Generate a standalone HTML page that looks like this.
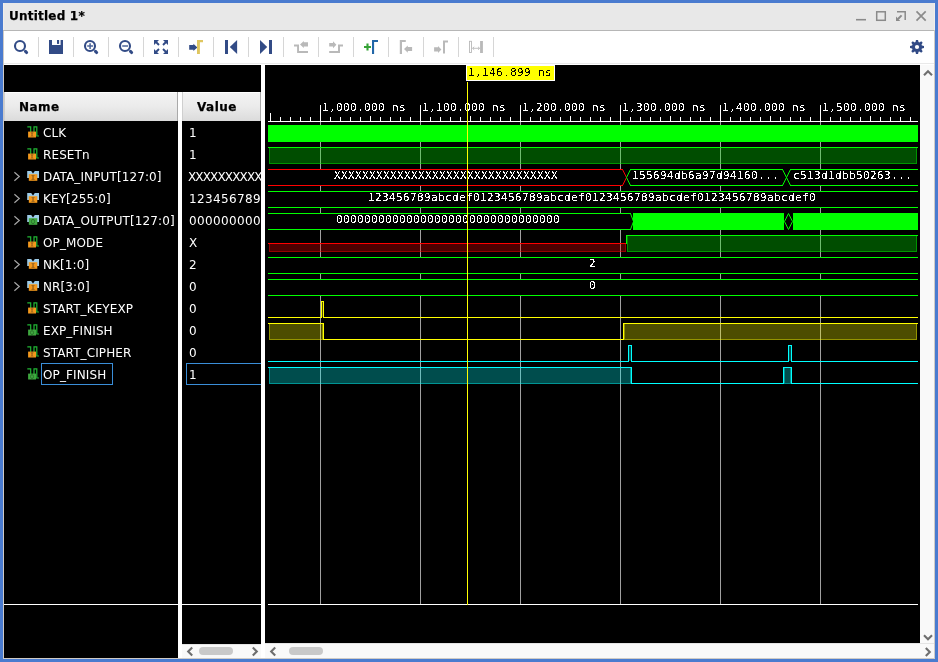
<!DOCTYPE html>
<html><head><meta charset="utf-8"><title>Untitled 1*</title>
<style>
html,body{margin:0;padding:0}
body{width:938px;height:662px;overflow:hidden;background:#4a7bcf;position:relative;font-family:"DejaVu Sans","Liberation Sans",sans-serif;font-size:12px}
#frame{position:absolute;left:3px;top:3px;width:932px;height:656px;background:#cfcbc6}
#title{position:absolute;left:3px;top:3px;width:930px;height:27px;background:#e8e8e8;border-left:1px solid #f1eeea;border-right:1px solid #f1eeea}
#title b{position:absolute;left:4.6px;top:6px;font-size:12px;line-height:15px;font-weight:bold;color:#000;letter-spacing:.22px;-webkit-text-stroke:.25px #000;will-change:transform}
#tline{position:absolute;left:3px;top:30px;width:931px;height:1px;background:#b6b6b6}
#tool{position:absolute;left:4px;top:31px;width:930px;height:34px;background:#fff}
#tool2{position:absolute;left:4px;top:63px;width:930px;height:1px;background:#e9e9e9}
svg{position:absolute;display:block}
svg.tb{left:3px;top:31px} svg.tt{left:3px;top:3px} svg.sc{left:0;top:0}
svg.wave{left:265px;top:65px;font-family:"DejaVu Sans Mono","Liberation Mono",monospace;font-size:11px;letter-spacing:.378px}
#left{position:absolute;left:4px;top:65px;width:257px;height:593px;background:#000}
#div1{position:absolute;left:178px;top:92px;width:4px;height:566px;background:#fff}
#div2{position:absolute;left:261px;top:65px;width:4px;height:593px;background:#fff}
.hdr{position:absolute;top:92px;height:29px;box-sizing:border-box;background:linear-gradient(#fff,#fff 1px,#f3f3f3 1px,#ebebeb 50%,#dbdbdb);border-left:1px solid #cfcfcf;border-right:1px solid #a9a9a9;font-weight:bold;color:#000;line-height:15px}
.hdr span{position:absolute;top:8px;letter-spacing:.45px;-webkit-text-stroke:.25px #000;will-change:transform}
#hn{left:4px;width:174px} #hv{left:182px;width:79px}
.nrow{position:absolute;left:4px;width:174px;height:22px;color:#fff}
.nrow .chev{left:9px;top:6px}
.nrow .ic{left:23px;top:5px}
.nrow .ic.bus{top:6px}
.nm{position:absolute;left:39.1px;top:5px;will-change:transform;letter-spacing:.11px;line-height:15px;white-space:nowrap}
#vals{position:absolute;left:182px;top:65px;width:79px;height:579px;overflow:hidden}
.vrow{position:absolute;left:0;width:200px;height:22px;color:#fff;margin-top:-65px}
.vrow span{position:absolute;left:7px;top:5px;will-change:transform;line-height:15px;white-space:nowrap}

.selb{position:absolute;box-sizing:border-box;border:1px solid #3a8ed8}
.hline{position:absolute;top:604px;height:1px;background:#fff}
.sb{position:absolute;background:#f9f9f9}
.thumb{position:absolute;height:8px;border-radius:4px;background:#c9c9c9;top:651px;margin-top:-4px}
</style></head><body>
<div id="frame"></div>
<div id="title"><b>Untitled 1*</b></div>
<svg class="tt" width="932" height="27" viewBox="3 3 932 27"><path d="M856 19.7 H866" stroke="#8a8a8a" stroke-width="1.6"/>
<rect x="876.7" y="11.8" width="8.6" height="8.5" fill="none" stroke="#8a8a8a" stroke-width="1.5"/>
<path d="M897 11.7 H905.2 V19.9" fill="none" stroke="#8a8a8a" stroke-width="1.5"/><path d="M901.6 15.4 L898 19" stroke="#8a8a8a" stroke-width="2"/><path d="M896 21 V16.5 L900.3 21 Z" fill="#8a8a8a"/>
<path d="M916.5 11.3 L925.7 20.6 M925.7 11.3 L916.5 20.6" stroke="#8a8a8a" stroke-width="1.7"/></svg>
<div id="tline"></div>
<div id="tool"></div><div id="tool2"></div>
<svg class="tb" width="932" height="34" viewBox="3 31 932 34"><rect x="38" y="37" width="1" height="20" fill="#d6d6d6" shape-rendering="crispEdges"/>
<rect x="73" y="37" width="1" height="20" fill="#d6d6d6" shape-rendering="crispEdges"/>
<rect x="108" y="37" width="1" height="20" fill="#d6d6d6" shape-rendering="crispEdges"/>
<rect x="143" y="37" width="1" height="20" fill="#d6d6d6" shape-rendering="crispEdges"/>
<rect x="178" y="37" width="1" height="20" fill="#d6d6d6" shape-rendering="crispEdges"/>
<rect x="213" y="37" width="1" height="20" fill="#d6d6d6" shape-rendering="crispEdges"/>
<rect x="248" y="37" width="1" height="20" fill="#d6d6d6" shape-rendering="crispEdges"/>
<rect x="283" y="37" width="1" height="20" fill="#d6d6d6" shape-rendering="crispEdges"/>
<rect x="318" y="37" width="1" height="20" fill="#d6d6d6" shape-rendering="crispEdges"/>
<rect x="353" y="37" width="1" height="20" fill="#d6d6d6" shape-rendering="crispEdges"/>
<rect x="388" y="37" width="1" height="20" fill="#d6d6d6" shape-rendering="crispEdges"/>
<rect x="423" y="37" width="1" height="20" fill="#d6d6d6" shape-rendering="crispEdges"/>
<rect x="458" y="37" width="1" height="20" fill="#d6d6d6" shape-rendering="crispEdges"/>
<rect x="493" y="37" width="1" height="20" fill="#d6d6d6" shape-rendering="crispEdges"/>
<circle cx="20" cy="46" r="5" fill="none" stroke="#324b86" stroke-width="2.1"/><path d="M25.5 51.4 L26.6 52.5" stroke="#324b86" stroke-width="3.1" stroke-linecap="round"/>
<path d="M49 40 h3 v5 h8.6 v-5 h2.4 v14 h-14 z" fill="#324b86"/><rect x="57" y="40" width="2.1" height="3.9" fill="#324b86"/>
<circle cx="90" cy="46" r="5" fill="none" stroke="#324b86" stroke-width="2.1"/><path d="M95.5 51.4 L96.6 52.5" stroke="#324b86" stroke-width="3.1" stroke-linecap="round"/><path d="M87.2 46 H93 M90.1 43.2 V48.9" stroke="#4c6499" stroke-width="1.5"/>
<circle cx="125" cy="46" r="5" fill="none" stroke="#324b86" stroke-width="2.1"/><path d="M130.5 51.4 L131.6 52.5" stroke="#324b86" stroke-width="3.1" stroke-linecap="round"/><path d="M122.2 46 H128" stroke="#4c6499" stroke-width="1.5"/>
<g fill="#324b86" stroke="#324b86"><path d="M154 40 h5 l-5 5z M168 40 v5 l-5 -5z M154 54 v-5 l5 5z M168 54 h-5 l5 -5z" stroke="none"/><path d="M156 42 L159 45 M166 42 L163 45 M156 52 L159 49 M166 52 L163 49" stroke-width="1.9" fill="none"/></g>
<path d="M189.2 45 H193.4 V43.8 L197.4 47.4 L193.4 51 V49.8 H189.2 Z" fill="#324b86"/><path d="M197 40 H203 V42.3 H199.9 V54 H197 Z" fill="#dfc65f"/>
<rect x="225" y="40" width="3" height="14" fill="#324b86"/><path d="M229.8 47 L237.1 40 V54 Z" fill="#324b86"/>
<rect x="269" y="40" width="3" height="14" fill="#324b86"/><path d="M267.2 47 L260 40 V54 Z" fill="#324b86"/>
<path d="M294 44.5 H299 V51 H308 V53 H297.1 V46.6 H294 Z" fill="#b9b9b9"/><path d="M300 44.4 L303.8 41 V42.3 H308 V46.6 H303.8 V48 Z" fill="#b9b9b9"/>
<path d="M343 44.4 H338 V50.9 H329.2 V53 H340 V46.6 H343 Z" fill="#b9b9b9"/><path d="M336.4 44.8 L333 41.3 V43 H329.2 V46.6 H333 V48.3 Z" fill="#b9b9b9"/>
<path d="M364 47 H371 M367.5 43.5 V50.5" stroke="#36a336" stroke-width="2.1"/><path d="M372 40 H378 V42 H374.1 V54 H372 Z" fill="#2166a8"/>
<path d="M399.8 40 H405.8 V42 H402 V54 H399.8 Z" fill="#b9b9b9"/><path d="M404 49.1 L407.8 45.4 V47 H412.1 V51.1 H407.8 V52.8 Z" fill="#b9b9b9"/>
<path d="M443 40.5 H448 V42.4 H445 V53.4 H443 Z" fill="#b9b9b9"/><path d="M441.4 49.4 L438 46 V47.3 H434.1 V51.6 H438 V53 Z" fill="#b9b9b9"/>
<rect x="469.5" y="41.3" width="2" height="11.2" fill="#fff" stroke="#b9b9b9" stroke-width="0.9"/><rect x="480.1" y="41" width="2.8" height="12" fill="#b9b9b9"/><path d="M472.6 48.3 H479.6 M474.2 46.8 L472.6 48.3 L474.2 49.8 M478 46.8 L479.6 48.3 L478 49.8" stroke="#b9b9b9" stroke-width="0.9" fill="none"/>
<circle cx="917" cy="47" r="5" fill="#324b86"/><path d="M915.95 40 H918.05 L918.7 43 H915.3 Z" fill="#324b86" transform="rotate(0 917 47)"/><path d="M915.95 40 H918.05 L918.7 43 H915.3 Z" fill="#324b86" transform="rotate(45 917 47)"/><path d="M915.95 40 H918.05 L918.7 43 H915.3 Z" fill="#324b86" transform="rotate(90 917 47)"/><path d="M915.95 40 H918.05 L918.7 43 H915.3 Z" fill="#324b86" transform="rotate(135 917 47)"/><path d="M915.95 40 H918.05 L918.7 43 H915.3 Z" fill="#324b86" transform="rotate(180 917 47)"/><path d="M915.95 40 H918.05 L918.7 43 H915.3 Z" fill="#324b86" transform="rotate(225 917 47)"/><path d="M915.95 40 H918.05 L918.7 43 H915.3 Z" fill="#324b86" transform="rotate(270 917 47)"/><path d="M915.95 40 H918.05 L918.7 43 H915.3 Z" fill="#324b86" transform="rotate(315 917 47)"/><circle cx="917" cy="47" r="2.1" fill="#fff"/></svg>
<div id="left"></div>
<div id="div1"></div><div id="div2"></div>
<div class="hdr" id="hn"><span style="left:14px">Name</span></div>
<div class="hdr" id="hv"><span style="left:14px">Value</span></div>
<div class="nrow" style="top:121px"><svg class="ic" width="14" height="14" viewBox="0 0 14 14"><path d="M0.3 0.8 H3.7 V10 M7 10 V0.8 H9.8 V10 H12" fill="none" stroke="#21b634" stroke-width="1.2"/><rect x="1.1" y="5.6" width="7.9" height="5.9" fill="#f3981c"/><path d="M3.4 6.3 H6.7 L5.7 8 V9.2 L6.8 10.6 H3.3 L4.4 9.2 V8 Z" fill="#8a5a1c" opacity=".75"/></svg><span class="nm">CLK</span></div>
<div class="nrow" style="top:143px"><svg class="ic" width="14" height="14" viewBox="0 0 14 14"><path d="M0.3 0.8 H3.7 V10 M7 10 V0.8 H9.8 V10 H12" fill="none" stroke="#21b634" stroke-width="1.2"/><rect x="1.1" y="5.6" width="7.9" height="5.9" fill="#f3981c"/><path d="M3.4 6.3 H6.7 L5.7 8 V9.2 L6.8 10.6 H3.3 L4.4 9.2 V8 Z" fill="#8a5a1c" opacity=".75"/></svg><span class="nm">RESETn</span></div>
<div class="nrow" style="top:165px"><svg class="chev" width="8" height="11" viewBox="0 0 8 11"><path d="M1.4 1.2 L6.3 5.5 L1.4 9.8" fill="none" stroke="#a6a6a6" stroke-width="1.2"/></svg><svg class="ic bus" width="14" height="14" viewBox="0 0 14 14"><path d="M0.2 0 H4.2 L6 2.4 L7.8 0 H12 V7 H0.2 Z" fill="#9ccbe8"/><rect x="1.8" y="3.2" width="8.5" height="6.6" fill="#f3981c"/><path d="M4.2 3.9 H7.9 L6.8 5.6 V7.4 L8 9.1 H4.1 L5.3 7.4 V5.6 Z" fill="#8a5a1c" opacity=".75"/></svg><span class="nm">DATA_INPUT[127:0]</span></div>
<div class="nrow" style="top:187px"><svg class="chev" width="8" height="11" viewBox="0 0 8 11"><path d="M1.4 1.2 L6.3 5.5 L1.4 9.8" fill="none" stroke="#a6a6a6" stroke-width="1.2"/></svg><svg class="ic bus" width="14" height="14" viewBox="0 0 14 14"><path d="M0.2 0 H4.2 L6 2.4 L7.8 0 H12 V7 H0.2 Z" fill="#9ccbe8"/><rect x="1.8" y="3.2" width="8.5" height="6.6" fill="#f3981c"/><path d="M4.2 3.9 H7.9 L6.8 5.6 V7.4 L8 9.1 H4.1 L5.3 7.4 V5.6 Z" fill="#8a5a1c" opacity=".75"/></svg><span class="nm">KEY[255:0]</span></div>
<div class="nrow" style="top:209px"><svg class="chev" width="8" height="11" viewBox="0 0 8 11"><path d="M1.4 1.2 L6.3 5.5 L1.4 9.8" fill="none" stroke="#a6a6a6" stroke-width="1.2"/></svg><svg class="ic bus" width="14" height="14" viewBox="0 0 14 14"><path d="M0.2 0 H4.2 L6 2.4 L7.8 0 H12 V7 H0.2 Z" fill="#9ccbe8"/><rect x="1.8" y="3.2" width="8.5" height="6.6" fill="#3fa73f"/><ellipse cx="6" cy="6.5" rx="1.6" ry="2.2" fill="none" stroke="#2a6e2a" stroke-width=".9"/></svg><span class="nm">DATA_OUTPUT[127:0]</span></div>
<div class="nrow" style="top:231px"><svg class="ic" width="14" height="14" viewBox="0 0 14 14"><path d="M0.3 0.8 H3.7 V10 M7 10 V0.8 H9.8 V10 H12" fill="none" stroke="#21b634" stroke-width="1.2"/><rect x="1.1" y="5.6" width="7.9" height="5.9" fill="#f3981c"/><path d="M3.4 6.3 H6.7 L5.7 8 V9.2 L6.8 10.6 H3.3 L4.4 9.2 V8 Z" fill="#8a5a1c" opacity=".75"/></svg><span class="nm">OP_MODE</span></div>
<div class="nrow" style="top:253px"><svg class="chev" width="8" height="11" viewBox="0 0 8 11"><path d="M1.4 1.2 L6.3 5.5 L1.4 9.8" fill="none" stroke="#a6a6a6" stroke-width="1.2"/></svg><svg class="ic bus" width="14" height="14" viewBox="0 0 14 14"><path d="M0.2 0 H4.2 L6 2.4 L7.8 0 H12 V7 H0.2 Z" fill="#9ccbe8"/><rect x="1.8" y="3.2" width="8.5" height="6.6" fill="#f3981c"/><path d="M4.2 3.9 H7.9 L6.8 5.6 V7.4 L8 9.1 H4.1 L5.3 7.4 V5.6 Z" fill="#8a5a1c" opacity=".75"/></svg><span class="nm">NK[1:0]</span></div>
<div class="nrow" style="top:275px"><svg class="chev" width="8" height="11" viewBox="0 0 8 11"><path d="M1.4 1.2 L6.3 5.5 L1.4 9.8" fill="none" stroke="#a6a6a6" stroke-width="1.2"/></svg><svg class="ic bus" width="14" height="14" viewBox="0 0 14 14"><path d="M0.2 0 H4.2 L6 2.4 L7.8 0 H12 V7 H0.2 Z" fill="#9ccbe8"/><rect x="1.8" y="3.2" width="8.5" height="6.6" fill="#f3981c"/><path d="M4.2 3.9 H7.9 L6.8 5.6 V7.4 L8 9.1 H4.1 L5.3 7.4 V5.6 Z" fill="#8a5a1c" opacity=".75"/></svg><span class="nm">NR[3:0]</span></div>
<div class="nrow" style="top:297px"><svg class="ic" width="14" height="14" viewBox="0 0 14 14"><path d="M0.3 0.8 H3.7 V10 M7 10 V0.8 H9.8 V10 H12" fill="none" stroke="#21b634" stroke-width="1.2"/><rect x="1.1" y="5.6" width="7.9" height="5.9" fill="#f3981c"/><path d="M3.4 6.3 H6.7 L5.7 8 V9.2 L6.8 10.6 H3.3 L4.4 9.2 V8 Z" fill="#8a5a1c" opacity=".75"/></svg><span class="nm">START_KEYEXP</span></div>
<div class="nrow" style="top:319px"><svg class="ic" width="14" height="14" viewBox="0 0 14 14"><path d="M0.3 0.8 H3.7 V10 M7 10 V0.8 H9.8 V10 H12" fill="none" stroke="#21b634" stroke-width="1.2"/><rect x="1.1" y="5.6" width="7.9" height="5.9" fill="#3fa73f"/><ellipse cx="5" cy="8.6" rx="1.5" ry="2" fill="none" stroke="#2a6e2a" stroke-width=".9"/></svg><span class="nm">EXP_FINISH</span></div>
<div class="nrow" style="top:341px"><svg class="ic" width="14" height="14" viewBox="0 0 14 14"><path d="M0.3 0.8 H3.7 V10 M7 10 V0.8 H9.8 V10 H12" fill="none" stroke="#21b634" stroke-width="1.2"/><rect x="1.1" y="5.6" width="7.9" height="5.9" fill="#f3981c"/><path d="M3.4 6.3 H6.7 L5.7 8 V9.2 L6.8 10.6 H3.3 L4.4 9.2 V8 Z" fill="#8a5a1c" opacity=".75"/></svg><span class="nm">START_CIPHER</span></div>
<div class="nrow" style="top:363px"><svg class="ic" width="14" height="14" viewBox="0 0 14 14"><path d="M0.3 0.8 H3.7 V10 M7 10 V0.8 H9.8 V10 H12" fill="none" stroke="#21b634" stroke-width="1.2"/><rect x="1.1" y="5.6" width="7.9" height="5.9" fill="#3fa73f"/><ellipse cx="5" cy="8.6" rx="1.5" ry="2" fill="none" stroke="#2a6e2a" stroke-width=".9"/></svg><span class="nm">OP_FINISH</span></div>

<div id="vals">
<div class="vrow" style="top:121px"><span style="letter-spacing:.37px">1</span></div>
<div class="vrow" style="top:143px"><span style="letter-spacing:.37px">1</span></div>
<div class="vrow" style="top:165px"><span style="letter-spacing:-.85px;margin-left:-.6px">XXXXXXXXXXXXXXXXXXXXXXXXXXXXXXXX</span></div>
<div class="vrow" style="top:187px"><span style="letter-spacing:.37px">123456789abcdef0123456789abcdef0</span></div>
<div class="vrow" style="top:209px"><span style="letter-spacing:.37px">00000000000000000000000000000000</span></div>
<div class="vrow" style="top:231px"><span style="letter-spacing:.37px">X</span></div>
<div class="vrow" style="top:253px"><span style="letter-spacing:.37px">2</span></div>
<div class="vrow" style="top:275px"><span style="letter-spacing:.37px">0</span></div>
<div class="vrow" style="top:297px"><span style="letter-spacing:.37px">0</span></div>
<div class="vrow" style="top:319px"><span style="letter-spacing:.37px">0</span></div>
<div class="vrow" style="top:341px"><span style="letter-spacing:.37px">0</span></div>
<div class="vrow" style="top:363px"><span style="letter-spacing:.37px">1</span></div>

<div class="selb" style="left:4px;top:298px;width:90px;height:22px"></div>
</div>
<div class="selb" style="left:41px;top:363px;width:72px;height:22px"></div>
<div class="hline" style="left:4px;width:174px"></div>
<div class="hline" style="left:182px;width:79px"></div>
<svg class="wave" width="655" height="578" viewBox="265 65 655 578" shape-rendering="crispEdges"><defs><filter id="na" x="0" y="0" width="100%" height="100%" color-interpolation-filters="sRGB"><feComponentTransfer><feFuncA type="discrete" tableValues="0 0 0 1 1 1"/></feComponentTransfer></filter></defs><rect x="265" y="65" width="655" height="578" fill="#000"/>
<rect x="320" y="105" width="1" height="499" fill="#a0a0a0"/>
<rect x="420" y="105" width="1" height="499" fill="#a0a0a0"/>
<rect x="520" y="105" width="1" height="499" fill="#a0a0a0"/>
<rect x="620" y="105" width="1" height="499" fill="#a0a0a0"/>
<rect x="720" y="105" width="1" height="499" fill="#a0a0a0"/>
<rect x="820" y="105" width="1" height="499" fill="#a0a0a0"/>
<rect x="268" y="121" width="650" height="1" fill="#fff"/>
<rect x="270" y="113" width="1" height="8" fill="#fff"/>
<rect x="280" y="117" width="1" height="4" fill="#fff"/>
<rect x="290" y="117" width="1" height="4" fill="#fff"/>
<rect x="300" y="117" width="1" height="4" fill="#fff"/>
<rect x="310" y="117" width="1" height="4" fill="#fff"/>
<rect x="330" y="117" width="1" height="4" fill="#fff"/>
<rect x="340" y="117" width="1" height="4" fill="#fff"/>
<rect x="350" y="117" width="1" height="4" fill="#fff"/>
<rect x="360" y="117" width="1" height="4" fill="#fff"/>
<rect x="370" y="116" width="1" height="5" fill="#fff"/>
<rect x="380" y="117" width="1" height="4" fill="#fff"/>
<rect x="390" y="117" width="1" height="4" fill="#fff"/>
<rect x="400" y="117" width="1" height="4" fill="#fff"/>
<rect x="410" y="117" width="1" height="4" fill="#fff"/>
<rect x="430" y="117" width="1" height="4" fill="#fff"/>
<rect x="440" y="117" width="1" height="4" fill="#fff"/>
<rect x="450" y="117" width="1" height="4" fill="#fff"/>
<rect x="460" y="117" width="1" height="4" fill="#fff"/>
<rect x="470" y="116" width="1" height="5" fill="#fff"/>
<rect x="480" y="117" width="1" height="4" fill="#fff"/>
<rect x="490" y="117" width="1" height="4" fill="#fff"/>
<rect x="500" y="117" width="1" height="4" fill="#fff"/>
<rect x="510" y="117" width="1" height="4" fill="#fff"/>
<rect x="530" y="117" width="1" height="4" fill="#fff"/>
<rect x="540" y="117" width="1" height="4" fill="#fff"/>
<rect x="550" y="117" width="1" height="4" fill="#fff"/>
<rect x="560" y="117" width="1" height="4" fill="#fff"/>
<rect x="570" y="116" width="1" height="5" fill="#fff"/>
<rect x="580" y="117" width="1" height="4" fill="#fff"/>
<rect x="590" y="117" width="1" height="4" fill="#fff"/>
<rect x="600" y="117" width="1" height="4" fill="#fff"/>
<rect x="610" y="117" width="1" height="4" fill="#fff"/>
<rect x="630" y="117" width="1" height="4" fill="#fff"/>
<rect x="640" y="117" width="1" height="4" fill="#fff"/>
<rect x="650" y="117" width="1" height="4" fill="#fff"/>
<rect x="660" y="117" width="1" height="4" fill="#fff"/>
<rect x="670" y="116" width="1" height="5" fill="#fff"/>
<rect x="680" y="117" width="1" height="4" fill="#fff"/>
<rect x="690" y="117" width="1" height="4" fill="#fff"/>
<rect x="700" y="117" width="1" height="4" fill="#fff"/>
<rect x="710" y="117" width="1" height="4" fill="#fff"/>
<rect x="730" y="117" width="1" height="4" fill="#fff"/>
<rect x="740" y="117" width="1" height="4" fill="#fff"/>
<rect x="750" y="117" width="1" height="4" fill="#fff"/>
<rect x="760" y="117" width="1" height="4" fill="#fff"/>
<rect x="770" y="116" width="1" height="5" fill="#fff"/>
<rect x="780" y="117" width="1" height="4" fill="#fff"/>
<rect x="790" y="117" width="1" height="4" fill="#fff"/>
<rect x="800" y="117" width="1" height="4" fill="#fff"/>
<rect x="810" y="117" width="1" height="4" fill="#fff"/>
<rect x="830" y="117" width="1" height="4" fill="#fff"/>
<rect x="840" y="117" width="1" height="4" fill="#fff"/>
<rect x="850" y="117" width="1" height="4" fill="#fff"/>
<rect x="860" y="117" width="1" height="4" fill="#fff"/>
<rect x="870" y="116" width="1" height="5" fill="#fff"/>
<rect x="880" y="117" width="1" height="4" fill="#fff"/>
<rect x="890" y="117" width="1" height="4" fill="#fff"/>
<rect x="900" y="117" width="1" height="4" fill="#fff"/>
<rect x="910" y="117" width="1" height="4" fill="#fff"/>
<rect x="320" y="105" width="1" height="17" fill="#fff"/>
<rect x="420" y="105" width="1" height="17" fill="#fff"/>
<rect x="520" y="105" width="1" height="17" fill="#fff"/>
<rect x="620" y="105" width="1" height="17" fill="#fff"/>
<rect x="720" y="105" width="1" height="17" fill="#fff"/>
<rect x="820" y="105" width="1" height="17" fill="#fff"/>
<rect x="268" y="604" width="650" height="1" fill="#fff"/>
<rect x="268" y="125" width="650" height="17" fill="#00ff00"/>
<rect x="268" y="147" width="650" height="1" fill="#00ff00"/>
<rect x="269" y="148" width="648" height="16" fill="rgba(0,255,0,0.3)"/>
<rect x="269" y="163" width="648" height="1" fill="rgba(0,255,0,0.4)"/>
<rect x="269" y="148" width="1" height="15" fill="rgba(0,255,0,0.4)"/>
<rect x="916" y="148" width="1" height="15" fill="rgba(0,255,0,0.4)"/>
<polygon points="268.5,169.5 622.5,169.5 626.5,177.5 622.5,185.5 268.5,185.5" fill="#000"/>
<rect x="268" y="169" width="355" height="17" fill="#000"/>
<rect x="268" y="169" width="355" height="1" fill="#ff0000"/>
<rect x="268" y="185" width="355" height="1" fill="#ff0000"/>
<line x1="622.5" y1="169.5" x2="626.5" y2="177.5" stroke="#ff0000" stroke-width="1" shape-rendering="auto"/>
<line x1="622.5" y1="185.5" x2="626.5" y2="177.5" stroke="#ff0000" stroke-width="1" shape-rendering="auto"/>
<polygon points="626.5,177.5 630.5,169.5 782.5,169.5 786.5,177.5 782.5,185.5 630.5,185.5" fill="#000"/>
<rect x="630" y="169" width="153" height="17" fill="#000"/>
<rect x="630" y="169" width="153" height="1" fill="#00ff00"/>
<rect x="630" y="185" width="153" height="1" fill="#00ff00"/>
<line x1="626.5" y1="177.5" x2="630.5" y2="169.5" stroke="#00ff00" stroke-width="1" shape-rendering="auto"/>
<line x1="626.5" y1="177.5" x2="630.5" y2="185.5" stroke="#00ff00" stroke-width="1" shape-rendering="auto"/>
<line x1="782.5" y1="169.5" x2="786.5" y2="177.5" stroke="#00ff00" stroke-width="1" shape-rendering="auto"/>
<line x1="782.5" y1="185.5" x2="786.5" y2="177.5" stroke="#00ff00" stroke-width="1" shape-rendering="auto"/>
<polygon points="786.5,177.5 790.5,169.5 917.5,169.5 917.5,185.5 790.5,185.5" fill="#000"/>
<rect x="790" y="169" width="128" height="17" fill="#000"/>
<rect x="790" y="169" width="128" height="1" fill="#00ff00"/>
<rect x="790" y="185" width="128" height="1" fill="#00ff00"/>
<line x1="786.5" y1="177.5" x2="790.5" y2="169.5" stroke="#00ff00" stroke-width="1" shape-rendering="auto"/>
<line x1="786.5" y1="177.5" x2="790.5" y2="185.5" stroke="#00ff00" stroke-width="1" shape-rendering="auto"/>
<polygon points="268.5,191.5 917.5,191.5 917.5,207.5 268.5,207.5" fill="#000"/>
<rect x="268" y="191" width="650" height="17" fill="#000"/>
<rect x="268" y="191" width="650" height="1" fill="#00ff00"/>
<rect x="268" y="207" width="650" height="1" fill="#00ff00"/>
<polygon points="268.5,213.5 630.5,213.5 633.5,221.5 630.5,229.5 268.5,229.5" fill="#000"/>
<rect x="268" y="213" width="363" height="17" fill="#000"/>
<rect x="268" y="213" width="363" height="1" fill="#00ff00"/>
<rect x="268" y="229" width="363" height="1" fill="#00ff00"/>
<line x1="630.5" y1="213.5" x2="633.5" y2="221.5" stroke="#00ff00" stroke-width="1" shape-rendering="auto"/>
<line x1="630.5" y1="229.5" x2="633.5" y2="221.5" stroke="#00ff00" stroke-width="1" shape-rendering="auto"/>
<rect x="633" y="213" width="151" height="17" fill="#00ff00"/>
<rect x="793" y="213" width="125" height="17" fill="#00ff00"/>
<polygon points="784.5,221.5 788.5,213.5 792.5,221.5 788.5,229.5" fill="#000" stroke="#00ff00" stroke-width="1" shape-rendering="auto"/>
<rect x="268" y="243" width="358" height="1" fill="#ff0000"/>
<rect x="269" y="244" width="357" height="8" fill="rgba(255,0,0,0.3)"/>
<rect x="269" y="251" width="357" height="1" fill="rgba(255,0,0,0.4)"/>
<rect x="269" y="244" width="1" height="7" fill="rgba(255,0,0,0.4)"/>
<rect x="625" y="244" width="1" height="7" fill="rgba(255,0,0,0.4)"/>
<rect x="626" y="235" width="1" height="9" fill="#00ff00"/>
<rect x="626" y="235" width="292" height="1" fill="#00ff00"/>
<rect x="627" y="236" width="290" height="16" fill="rgba(0,255,0,0.3)"/>
<rect x="627" y="251" width="290" height="1" fill="rgba(0,255,0,0.4)"/>
<rect x="627" y="236" width="1" height="15" fill="rgba(0,255,0,0.4)"/>
<rect x="916" y="236" width="1" height="15" fill="rgba(0,255,0,0.4)"/>
<polygon points="268.5,257.5 917.5,257.5 917.5,273.5 268.5,273.5" fill="#000"/>
<rect x="268" y="257" width="650" height="17" fill="#000"/>
<rect x="268" y="257" width="650" height="1" fill="#00ff00"/>
<rect x="268" y="273" width="650" height="1" fill="#00ff00"/>
<polygon points="268.5,279.5 917.5,279.5 917.5,295.5 268.5,295.5" fill="#000"/>
<rect x="268" y="279" width="650" height="17" fill="#000"/>
<rect x="268" y="279" width="650" height="1" fill="#00ff00"/>
<rect x="268" y="295" width="650" height="1" fill="#00ff00"/>
<rect x="268" y="317" width="54" height="1" fill="#ffff00"/>
<rect x="321" y="301" width="1" height="17" fill="#ffff00"/>
<rect x="321" y="301" width="3" height="1" fill="#ffff00"/>
<rect x="323" y="301" width="1" height="17" fill="#ffff00"/>
<rect x="323" y="317" width="595" height="1" fill="#ffff00"/>
<rect x="322" y="302" width="1" height="15" fill="rgba(255,255,0,0.3)"/>
<rect x="268" y="323" width="56" height="1" fill="#ffff00"/>
<rect x="269" y="324" width="54" height="16" fill="rgba(255,255,0,0.3)"/>
<rect x="269" y="339" width="54" height="1" fill="rgba(255,255,0,0.4)"/>
<rect x="269" y="324" width="1" height="15" fill="rgba(255,255,0,0.4)"/>
<rect x="322" y="324" width="1" height="15" fill="rgba(255,255,0,0.4)"/>
<rect x="323" y="323" width="1" height="17" fill="#ffff00"/>
<rect x="323" y="339" width="301" height="1" fill="#ffff00"/>
<rect x="623" y="323" width="1" height="17" fill="#ffff00"/>
<rect x="623" y="323" width="295" height="1" fill="#ffff00"/>
<rect x="624" y="324" width="293" height="16" fill="rgba(255,255,0,0.3)"/>
<rect x="624" y="339" width="293" height="1" fill="rgba(255,255,0,0.4)"/>
<rect x="624" y="324" width="1" height="15" fill="rgba(255,255,0,0.4)"/>
<rect x="916" y="324" width="1" height="15" fill="rgba(255,255,0,0.4)"/>
<rect x="268" y="361" width="361" height="1" fill="#00ffff"/>
<rect x="628" y="345" width="1" height="17" fill="#00ffff"/>
<rect x="628" y="345" width="4" height="1" fill="#00ffff"/>
<rect x="631" y="345" width="1" height="17" fill="#00ffff"/>
<rect x="629" y="346" width="2" height="15" fill="rgba(0,255,255,0.3)"/>
<rect x="631" y="361" width="158" height="1" fill="#00ffff"/>
<rect x="788" y="345" width="1" height="17" fill="#00ffff"/>
<rect x="788" y="345" width="4" height="1" fill="#00ffff"/>
<rect x="791" y="345" width="1" height="17" fill="#00ffff"/>
<rect x="791" y="361" width="127" height="1" fill="#00ffff"/>
<rect x="789" y="346" width="2" height="15" fill="rgba(0,255,255,0.3)"/>
<rect x="268" y="367" width="364" height="1" fill="#00ffff"/>
<rect x="269" y="368" width="362" height="16" fill="rgba(0,255,255,0.3)"/>
<rect x="269" y="383" width="362" height="1" fill="rgba(0,255,255,0.4)"/>
<rect x="269" y="368" width="1" height="15" fill="rgba(0,255,255,0.4)"/>
<rect x="630" y="368" width="1" height="15" fill="rgba(0,255,255,0.4)"/>
<rect x="631" y="367" width="1" height="17" fill="#00ffff"/>
<rect x="631" y="383" width="153" height="1" fill="#00ffff"/>
<rect x="783" y="367" width="1" height="17" fill="#00ffff"/>
<rect x="783" y="367" width="9" height="1" fill="#00ffff"/>
<rect x="791" y="367" width="1" height="17" fill="#00ffff"/>
<rect x="791" y="383" width="127" height="1" fill="#00ffff"/>
<rect x="784" y="368" width="7" height="16" fill="rgba(0,255,255,0.3)"/>
<rect x="784" y="383" width="7" height="1" fill="rgba(0,255,255,0.4)"/>
<rect x="784" y="368" width="1" height="15" fill="rgba(0,255,255,0.4)"/>
<rect x="790" y="368" width="1" height="15" fill="rgba(0,255,255,0.4)"/><g filter="url(#na)"><text x="322" y="111" fill="#fff">1,000.000 ns</text>
<text x="422" y="111" fill="#fff">1,100.000 ns</text>
<text x="522" y="111" fill="#fff">1,200.000 ns</text>
<text x="622" y="111" fill="#fff">1,300.000 ns</text>
<text x="722" y="111" fill="#fff">1,400.000 ns</text>
<text x="822" y="111" fill="#fff">1,500.000 ns</text>
<text x="334" y="179" fill="#fff">XXXXXXXXXXXXXXXXXXXXXXXXXXXXXXXX</text>
<text x="632" y="179" fill="#fff">155694db6a97d94160...</text>
<text x="793" y="179" fill="#fff">c513d1dbb50263...</text>
<text x="368" y="201" fill="#fff">123456789abcdef0123456789abcdef0123456789abcdef0123456789abcdef0</text>
<text x="336" y="223" fill="#fff">00000000000000000000000000000000</text>
<text x="589" y="267" fill="#fff">2</text>
<text x="589" y="289" fill="#fff">0</text></g><rect x="467" y="82" width="1" height="523" fill="#ffff00"/>
<rect x="466" y="65" width="89" height="16" fill="#fff"/>
<rect x="467" y="66" width="87" height="14" fill="#ffff00"/>
<text x="468" y="76" fill="#000" filter="url(#na)">1,146.899 ns</text></svg>
<div class="sb" style="left:920px;top:65px;width:14px;height:578px"></div>
<div class="sb" style="left:182px;top:644px;width:79px;height:14px;border-top:1px solid #e4e4e4;box-sizing:border-box"></div>
<div class="sb" style="left:265px;top:643px;width:669px;height:15px;border-top:1px solid #e4e4e4;box-sizing:border-box"></div>
<div class="thumb" style="left:199px;width:34px"></div>
<div class="thumb" style="left:289px;width:34px"></div>
<svg class="sc" width="938" height="662" viewBox="0 0 938 662"><path d="M924 75.2 L928 71.2 L932 75.2" fill="none" stroke="#6e6e6e" stroke-width="2.1"/>
<path d="M924 635.3 L928 639.3 L932 635.3" fill="none" stroke="#6e6e6e" stroke-width="2.1"/>
<path d="M925.8 648 L929.8 652 L925.8 656" fill="none" stroke="#6e6e6e" stroke-width="2.1"/>
<path d="M192.2 647.5 L188.2 651.5 L192.2 655.5" fill="none" stroke="#6e6e6e" stroke-width="2.1"/>
<path d="M252.8 647.5 L256.8 651.5 L252.8 655.5" fill="none" stroke="#6e6e6e" stroke-width="2.1"/>
<path d="M275.2 647.5 L271.2 651.5 L275.2 655.5" fill="none" stroke="#6e6e6e" stroke-width="2.1"/></svg>
</body></html>
